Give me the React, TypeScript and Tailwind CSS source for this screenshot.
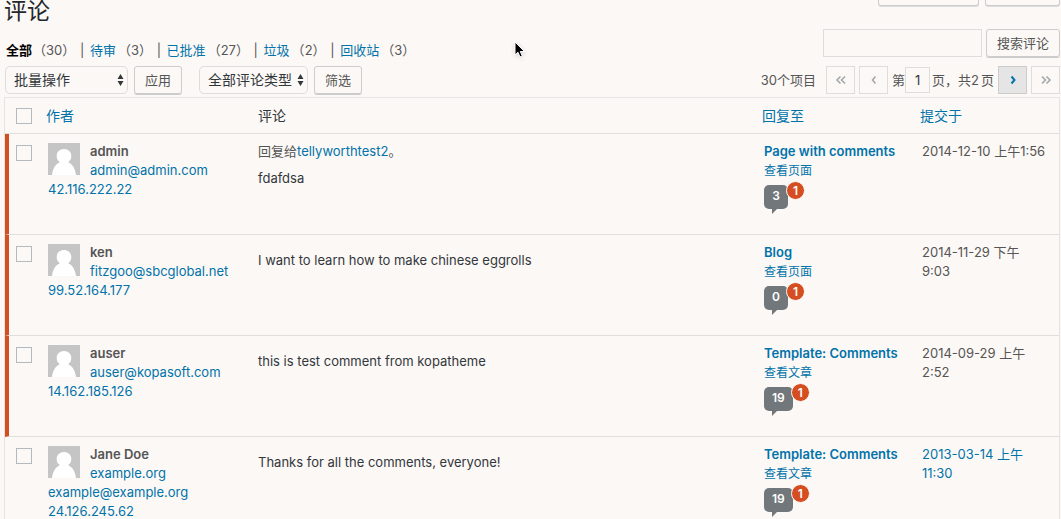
import { ReactNode } from "react"

const filters = [
  { label: "待审", count: 3 },
  { label: "已批准", count: 27 },
  { label: "垃圾", count: 2 },
  { label: "回收站", count: 3 },
]

const comments = [
  {
    author: "admin",
    email: "admin@admin.com",
    ip: "42.116.222.22",
    replyTo: "tellyworthtest2",
    text: "fdafdsa",
    post: "Page with comments",
    view: "查看页面",
    count: 3,
    date: "2014-12-10 上午1:56",
    pending: true,
  },
  {
    author: "ken",
    email: "fitzgoo@sbcglobal.net",
    ip: "99.52.164.177",
    text: "I want to learn how to make chinese eggrolls",
    post: "Blog",
    view: "查看页面",
    count: 0,
    date: "2014-11-29 下午\n9:03",
    pending: true,
  },
  {
    author: "auser",
    email: "auser@kopasoft.com",
    ip: "14.162.185.126",
    text: "this is test comment from kopatheme",
    post: "Template: Comments",
    view: "查看文章",
    count: 19,
    date: "2014-09-29 上午\n2:52",
    pending: true,
  },
  {
    author: "Jane Doe",
    site: "example.org",
    email: "example@example.org",
    ip: "24.126.245.62",
    text: "Thanks for all the comments, everyone!",
    post: "Template: Comments",
    view: "查看文章",
    count: 19,
    date: "2013-03-14 上午\n11:30",
    pending: false,
  },
]

function Link({ children, style = "" }: { children: ReactNode; style?: string }) {
  return (
    <a href="#" className={`text-[#0073aa] ${style}`}>
      {children}
    </a>
  )
}

function Button({ children, style = "" }: { children: ReactNode; style?: string }) {
  return (
    <button
      type="button"
      className={`h-7 shrink-0 rounded-[3px] border border-[#ccc] text-[#555] shadow-[0_1px_0_#ccc] ${style}`}
    >
      {children}
    </button>
  )
}

function Select({ label, style }: { label: string; style: string }) {
  return (
    <div className={`relative h-7 ${style}`}>
      <select
        aria-label={label}
        className="h-7 w-full appearance-none rounded-[5px] border border-[#ddd] pl-2 text-sm text-[#32373c]"
      >
        <option>{label}</option>
      </select>
      <svg
        className="pointer-events-none absolute right-1 top-2"
        width="7"
        height="12"
        viewBox="0 0 7 12"
        fill="#32373c"
      >
        <path d="M3.500 0 6.500 5h-6zM3.500 12l-3-5h6z" />
      </svg>
    </div>
  )
}

function PageButton({ label, children, active }: { label: string; children: ReactNode; active?: boolean }) {
  return (
    <button
      type="button"
      aria-label={label}
      className={`flex h-7 w-[29px] items-center justify-center border ${
        active ? "border-[#ccc] bg-[#e5e5e5] text-[#0073aa]" : "border-[#ddd] text-[#a0a5aa]"
      }`}
    >
      <svg width="12" height="10" viewBox="0 0 12 10" fill="none" stroke="currentColor" strokeWidth={active ? 2 : 1.5}>
        {children}
      </svg>
    </button>
  )
}

function Checkbox({ label }: { label: string }) {
  return (
    <input
      type="checkbox"
      aria-label={label}
      className="block h-4 w-4 appearance-none border border-[#b4b9be]"
    />
  )
}

function Avatar() {
  return (
    <svg className="float-left mt-px mr-2.5" width="32" height="32" viewBox="0 0 32 32">
      <path fill="#c5c5c5" d="M0 0h32v32H0z" />
      <path
        fill="#fff"
        d="M16 6c4.300 0 7.300 3 7.300 7 0 2.400-.8 4.300-2.300 5.300-.6.500-.6 1.200 0 1.500 3.700 1.900 6.300 6.200 7 12.200H4c.7-6 3.300-10.300 7-12.200.6-.3.6-1 0-1.500-1.500-1-2.300-2.900-2.300-5.300 0-4 3-7 7.300-7z"
      />
    </svg>
  )
}

function Bubble({ count }: { count: number }) {
  return (
    <div className="mt-[5px] flex">
      <a
        href="#"
        className="relative h-6 min-w-6 rounded-[5px] bg-[#72777c] px-2 text-center text-xs leading-[22px] font-semibold text-white"
      >
        {count}
        <svg className="absolute top-6 left-2" width="5" height="5" fill="#72777c">
          <path d="M0 0h5L0 5z" />
        </svg>
        <span className="absolute -top-1 -right-[17px] h-[19px] min-w-[19px] rounded-full border border-[#fcf8f5] bg-[#d54e21] text-xs leading-[17px]">
          1
        </span>
      </a>
    </div>
  )
}

export default function App() {
  return (
    <div className="relative h-screen overflow-hidden bg-[#fcf8f5] pr-px pl-1 font-[Inter,'Noto_Sans_CJK_SC',sans-serif] text-[13px] leading-[19px] text-[#555]">
      <header className="flex h-[29px] items-start justify-between">
        <h1 className="text-[23px] leading-[22px] text-[#23282d]">评论</h1>
        <div className="flex gap-[6px]">
          <button
            type="button"
            aria-label="显示选项"
            className="h-[6px] w-[101px] rounded-b-[3px] border border-t-0 border-[#ccc] shadow-[0_1px_0_#ddd]"
          />
          <button
            type="button"
            aria-label="帮助"
            className="h-[6px] w-[75px] rounded-b-[3px] border border-t-0 border-[#ccc] shadow-[0_1px_0_#ddd]"
          />
        </div>
      </header>

      <div className="flex h-7 items-end justify-between">
        <nav className="pl-[2px] leading-[14px]">
          <a href="#" className="font-bold text-black">
            全部
          </a>
          <span className="ml-px">（30）</span>
          {filters.map((f) => (
            <span key={f.label}>
              <span className="mr-[2px] ml-px"> | </span>
              <Link>{f.label}</Link>
              <span className="ml-[2px]">（{f.count}） </span>
            </span>
          ))}
        </nav>
        <form className="flex gap-1">
          <input type="search" aria-label="搜索评论" className="h-7 w-[159px] border border-[#ddd] px-1" />
          <Button style="w-[74px]">搜索评论</Button>
        </form>
      </div>

      <div className="mt-[9px] mb-[3px] flex items-center justify-between">
        <div className="flex gap-[6px] pl-px">
          <Select label="批量操作" style="w-[123px]" />
          <Button style="w-12 mr-[11px]">应用</Button>
          <Select label="全部评论类型" style="w-[109px]" />
          <Button style="w-12">筛选</Button>
        </div>
        <div className="flex items-center gap-1">
          <span className="mr-[6px]">30个项目</span>
          <PageButton label="首页">
            <path d="M5.500 1.500 2 5l3.500 3.500M10 1.500 6.500 5 10 8.500" />
          </PageButton>
          <PageButton label="上一页">
            <path d="M7.500 1.500 4.500 5l3 3.500" />
          </PageButton>
          <label className="flex items-center">
            第
            <input
              type="text"
              aria-label="当前页"
              defaultValue="1"
              className="mr-[2px] h-[26px] w-[25px] border border-[#ddd] text-center text-[#32373c]"
            />
            页，共2<span className="ml-[2px]">页</span>
          </label>
          <PageButton label="下一页" active>
            <path d="M4.500 1.500 7.500 5l-3 3.500" />
          </PageButton>
          <PageButton label="尾页">
            <path d="M2 1.500 5.500 5 2 8.500M6.500 1.500 10 5 6.500 8.500" />
          </PageButton>
        </div>
      </div>

      <table className="w-full table-fixed border-separate border-spacing-0 border border-[#e5e5e5] text-left">
        <thead className="text-sm text-[#32373c]">
          <tr className="[&>th]:h-9 [&>th]:border-b [&>th]:border-[#e1dfdd] [&>th]:font-normal">
            <td className="w-[33px] border-b border-[#e1dfdd] pl-[11px]">
              <Checkbox label="全选" />
            </td>
            <th className="w-[210px] pl-2">
              <Link>作者</Link>
            </th>
            <th className="pl-[10px]">评论</th>
            <th className="w-[158px] pl-2">
              <Link>回复至</Link>
            </th>
            <th className="w-[147px] pl-2">
              <Link>提交于</Link>
            </th>
          </tr>
        </thead>
        <tbody>
          {comments.map((c) => (
            <tr
              key={c.author}
              className="[&>td]:h-[101px] [&>td]:border-b [&>td]:border-b-[#e1dfdd] [&>td]:pt-2 [&>td]:align-top"
            >
              <td className={c.pending ? "border-l-4 border-l-[#d54e21] pl-[7px]" : "pl-[11px]"}>
                <div className="pt-[3px]">
                  <Checkbox label={c.author} />
                </div>
              </td>
              <td className="pl-[10px]">
                <Avatar />
                <strong className="font-semibold">{c.author}</strong>
                <br />
                {c.site && (
                  <>
                    <Link>{c.site}</Link>
                    <br />
                  </>
                )}
                <Link>{c.email}</Link>
                <br />
                <Link>{c.ip}</Link>
              </td>
              <td className="pl-[10px]">
                {c.replyTo && (
                  <div>
                    回复给<Link>{c.replyTo}</Link>。
                  </div>
                )}
                <p className="mt-2 text-[#32373c]">{c.text}</p>
              </td>
              <td className="pl-[10px]">
                <Link style="block font-semibold">{c.post}</Link>
                <Link style="block text-xs leading-[19px]">{c.view}</Link>
                <Bubble count={c.count} />
              </td>
              <td className="pl-[10px] whitespace-pre-line">
                {c.pending ? c.date : <Link>{c.date}</Link>}
              </td>
            </tr>
          ))}
        </tbody>
      </table>

      {/* mouse pointer */}
      <svg
        className="pointer-events-none absolute top-[41px] left-[514px] drop-shadow-sm"
        width="12"
        height="18"
        viewBox="0 0 12 18"
      >
        <path d="M1 1v13l3-2.700L6 16l2.300-1-2-4.500H10.500z" fill="#000" stroke="#fff" />
      </svg>
    </div>
  )
}
